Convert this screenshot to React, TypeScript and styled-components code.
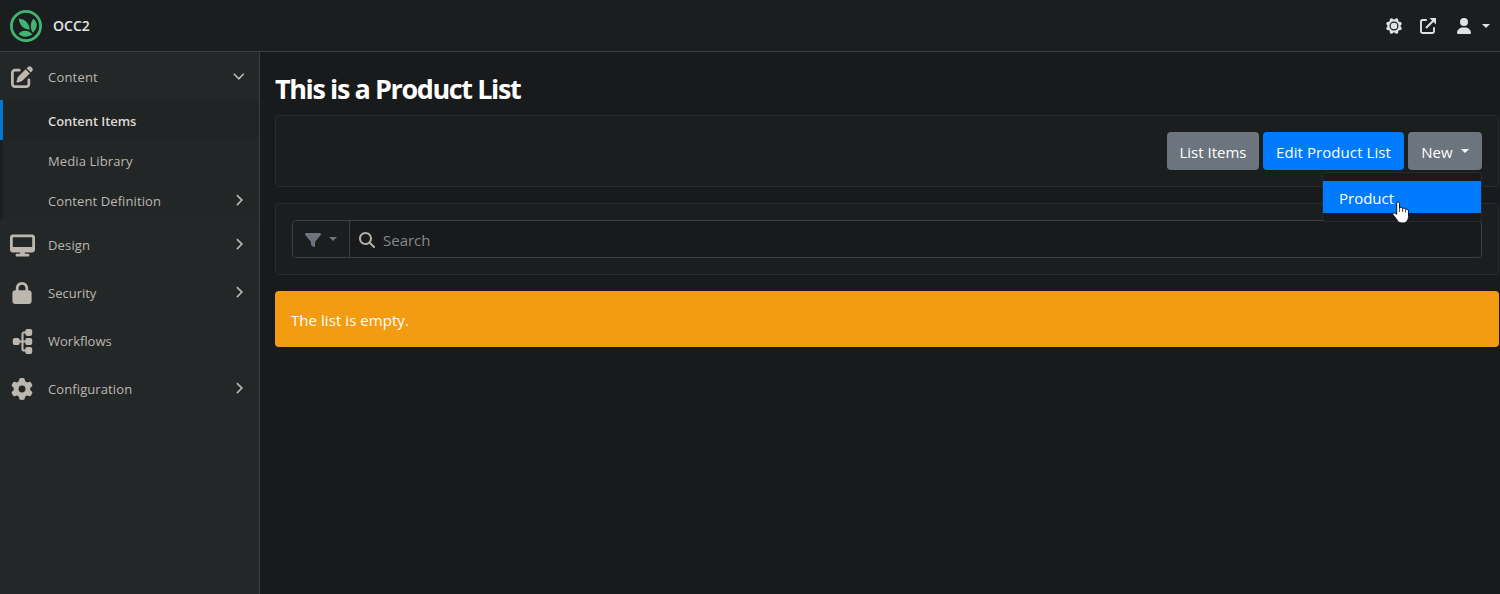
import React from 'react';
import styled, { createGlobalStyle } from 'styled-components';
import { FaPenToSquare, FaDesktop, FaLock, FaSitemap, FaGear, FaFilter, FaMagnifyingGlass, FaUser } from 'react-icons/fa6';

const GlobalStyle = createGlobalStyle`
  * { box-sizing: border-box; }
  body {
    margin: 0;
    background: #181a1b;
    color: #fff;
    font-family: 'Segoe UI', 'Open Sans', 'Noto Sans', sans-serif;
    font-size: 15px;
    overflow: hidden;
  }
`;

const Page = styled.div`
  display: flex;
  flex-direction: column;
  height: 594px;
`;

const TopBar = styled.header`
  display: flex;
  align-items: center;
  justify-content: space-between;
  height: 52px;
  padding: 0 10px;
  background: #1b1e1f;
  border-bottom: 1px solid #3a3f41;
`;

const Brand = styled.div`
  display: flex;
  align-items: center;
  gap: 11px;
  color: #e4e6e9;
  font-size: 14px;
  font-weight: 600;
`;

const TopActions = styled.div`
  display: flex;
  align-items: center;
  color: #dee2e6;
  svg { display: block; }
`;

const ActionIcon = styled.span<{ $after: number }>`
  margin-right: ${p => p.$after}px;
`;

const Caret = styled.span<{ $gap?: number }>`
  width: 0;
  height: 0;
  margin-left: ${p => p.$gap ?? 0}px;
  border: 4px solid transparent;
  border-top-color: currentColor;
  border-bottom: 0;
`;

const Body = styled.div`
  display: flex;
  flex: 1;
`;

const Sidebar = styled.nav`
  width: 260px;
  background: #232728;
  border-right: 1px solid #3a3f41;
  color: #bdb7af;
`;

const MenuRow = styled.a`
  display: flex;
  align-items: center;
  height: 48px;
  padding-right: 13px;
  font-size: 13px;
`;

const MenuIcon = styled.span<{ $turned?: boolean; $size?: number }>`
  display: flex;
  justify-content: center;
  width: 45px;
  margin-right: 3px;
  padding: 2px 1px 0 0;
  svg {
    width: ${p => p.$size ?? 22}px;
    height: ${p => p.$size ?? 22}px;
    transform: ${p => (p.$turned ? 'rotate(-90deg)' : 'none')};
  }
`;

const MenuLabel = styled.span<{ $tracking?: number }>`
  flex: 1;
  padding-top: 2px;
  letter-spacing: ${p => p.$tracking ?? 0.1}px;
`;

const SubMenu = styled.div`
  height: 120px;
`;

const SubRow = styled.a<{ $active?: boolean }>`
  display: flex;
  align-items: center;
  height: 40px;
  padding: 0 13px 0 45px;
  border-left: 3px solid ${p => (p.$active ? '#0078d4' : '#1b1e1f')};
  background: ${p => (p.$active ? '#202425' : '#222627')};
  color: ${p => (p.$active ? '#dcd9d4' : '#bdb7af')};
  font-size: 13px;
  font-weight: ${p => (p.$active ? 600 : 400)};
`;

const Main = styled.main`
  flex: 1;
  padding: 0 1px 0 15px;
`;

const Title = styled.h1`
  display: flex;
  align-items: center;
  height: 63px;
  margin: 0;
  padding-top: 10px;
  font-size: 27px;
  font-weight: 700;
  letter-spacing: -1.4px;
`;

const Card = styled.section`
  display: flex;
  justify-content: flex-end;
  gap: 4px;
  height: 72px;
  margin-bottom: 16px;
  padding: 16px;
  background: #1b1e1f;
  border: 1px solid #282c2d;
  border-radius: 4px;
`;

const Button = styled.button<{ $primary?: boolean; $width: number }>`
  display: flex;
  align-items: center;
  justify-content: center;
  width: ${p => p.$width}px;
  height: 38px;
  padding: 2px 0 0;
  border: 0;
  border-radius: 4px;
  background: ${p => (p.$primary ? '#007bff' : '#6c757d')};
  color: #fff;
  font: inherit;
  letter-spacing: ${p => (p.$primary ? 0.07 : 0)}px;
  white-space: nowrap;
`;

const ButtonCaret = styled(Caret)`
  margin-bottom: 3px;
`;

const DropdownAnchor = styled.div`
  position: relative;
`;

const DropdownMenu = styled.div`
  position: absolute;
  z-index: 2;
  top: 40px;
  right: 0;
  width: 160px;
  padding: 8px 0;
  background: #181a1b;
  border: 1px solid #282b2d;
  border-radius: 4px;
`;

const DropdownItem = styled.a`
  display: flex;
  align-items: center;
  height: 32px;
  padding: 1px 16px 0;
  background: #007bff;
`;

const Pointer = styled.svg`
  position: absolute;
  top: 28px;
  left: 69px;
`;

const InputGroup = styled.div`
  display: flex;
  width: 100%;
  height: 38px;
  border: 1px solid #3c4143;
  border-radius: 4px;
  background: #181a1b;
  overflow: hidden;
`;

const FilterButton = styled.div`
  display: flex;
  align-items: center;
  width: 57px;
  padding: 1px 0 0 12px;
  border-right: 1px solid #3c4143;
  background: #1b1e1f;
  color: #6c757d;
`;

const FilterCaret = styled(Caret)`
  margin-bottom: 2px;
`;

const SearchBox = styled.div`
  display: flex;
  align-items: center;
  padding: 2px 0 0 9px;
  gap: 8px;
  color: #b0aca6;
`;

const Placeholder = styled.span`
  color: #85888b;
`;

const Alert = styled.div`
  display: flex;
  align-items: center;
  height: 56px;
  padding: 1px 16px 0;
  border-radius: 4px;
  background: #f39c12;
  letter-spacing: 0.06px;
`;

const Logo = () => (
  <svg width="32" height="32" viewBox="0 0 32 32" fill="#41b572">
    <circle cx="16" cy="16" r="14.6" fill="none" stroke="#41b572" strokeWidth="2.8" />
    <path d="M8.8 8.5C14.5 9.2 19.5 13 19.7 19.7C13.5 19.3 9.2 15 8.8 8.5Z" />
    <path d="M23.5 8.5C28.2 13 27.7 18.5 22.7 22.7C20 18 20 13 23.5 8.5Z" />
    <path d="M8.5 23.8C12 19.8 18 19.8 22.5 24.3C18 27.8 12 27.6 8.5 23.8Z" />
  </svg>
);

const rays = [22.5, 67.5, 112.5, 157.5, 202.5, 247.5, 292.5, 337.5];

const Sun = () => (
  <svg width="16" height="16" viewBox="0 0 16 16" fill="currentColor">
    {rays.map(angle => (
      <path key={angle} d="M5 3.2L6.9 0.1Q8 -0.5 9.1 0.1L11 3.2Z" transform={`rotate(${angle} 8 8)`} />
    ))}
    <circle cx="8" cy="8" r="6" />
    <circle cx="8" cy="8" r="3.9" fill="none" stroke="#1b1e1f" strokeWidth="1.2" />
  </svg>
);

const ExternalLink = () => (
  <svg width="16" height="16" viewBox="0 0 16 16" fill="none" stroke="currentColor" strokeWidth="1.9">
    <path d="M6.8 2H2.5Q1 2 1 3.5V13.5Q1 15 2.5 15H12.5Q14 15 14 13.5V9.2" />
    <path d="M6 10L14 2" />
    <path d="M9.5 0H16V6.5L13.5 4L12 2.5Z" fill="currentColor" stroke="none" />
  </svg>
);

const Chevron = ({ down = false }: { down?: boolean }) => (
  <svg width="14" height="14" viewBox="0 0 14 14" fill="none" stroke="currentColor" strokeWidth="1.6">
    <path d={down ? 'M1.8 4.8L6.8 9.8L11.8 4.8' : 'M4.9 2.1L9.9 7.1L4.9 12.1'} />
  </svg>
);

const HandPointer = () => (
  <Pointer width="20" height="24" viewBox="0 0 20 24">
    <path
      d="M4.7 2.3C4.7 0.5 7.5 0.5 7.5 2.3V7C8 5.9 10.6 6.2 10.6 7.7C11.2 6.8 13.5 7.1 13.5 8.5C14.2 7.7 16.5 8.2 16.5 10V15.5C16.5 18.5 14.6 21.9 11.5 21.9H9.3C6.8 21.9 5.8 20.5 4.6 18.3L1 13.8C0 12 2.4 10.8 4.7 13.3Z"
      fill="#fff" stroke="#15151c" strokeWidth="1"
    />
    <path d="M7.6 7V11M10.6 8V11M13.5 8.8V11.5" stroke="#15151c" strokeWidth="0.8" />
  </Pointer>
);

const sections = [
  { label: 'Design', icon: <FaDesktop />, expandable: true, size: 25, tracking: 0.15 },
  { label: 'Security', icon: <FaLock />, expandable: true, tracking: 0 },
  { label: 'Workflows', icon: <FaSitemap />, expandable: false, size: 25, turned: true, tracking: 0 },
  { label: 'Configuration', icon: <FaGear />, expandable: true, tracking: 0.1 },
];

export default function App() {
  return (
    <Page>
      <GlobalStyle />
      <TopBar>
        <Brand><Logo />OCC2</Brand>
        <TopActions>
          <ActionIcon $after={18}><Sun /></ActionIcon>
          <ActionIcon $after={20}><ExternalLink /></ActionIcon>
          <ActionIcon $after={10}><FaUser size={16} /></ActionIcon>
          <Caret />
        </TopActions>
      </TopBar>
      <Body>
        <Sidebar>
          <MenuRow>
            <MenuIcon><FaPenToSquare /></MenuIcon>
            <MenuLabel $tracking={0.2}>Content</MenuLabel>
            <Chevron down />
          </MenuRow>
          <SubMenu>
            <SubRow $active><MenuLabel $tracking={-0.07}>Content Items</MenuLabel></SubRow>
            <SubRow><MenuLabel>Media Library</MenuLabel></SubRow>
            <SubRow><MenuLabel>Content Definition</MenuLabel><Chevron /></SubRow>
          </SubMenu>
          {sections.map(s => (
            <MenuRow key={s.label}>
              <MenuIcon $turned={s.turned} $size={s.size}>{s.icon}</MenuIcon>
              <MenuLabel $tracking={s.tracking}>{s.label}</MenuLabel>
              {s.expandable && <Chevron />}
            </MenuRow>
          ))}
        </Sidebar>
        <Main>
          <Title>This is a Product List</Title>
          <Card>
            <Button $width={92}>List Items</Button>
            <Button $width={141} $primary>Edit Product List</Button>
            <DropdownAnchor>
              <Button $width={74}>New<ButtonCaret $gap={8} /></Button>
              <DropdownMenu>
                <DropdownItem>Product</DropdownItem>
                <HandPointer />
              </DropdownMenu>
            </DropdownAnchor>
          </Card>
          <Card>
            <InputGroup>
              <FilterButton><FaFilter size={16} /><FilterCaret $gap={8} /></FilterButton>
              <SearchBox><FaMagnifyingGlass size={16} /><Placeholder>Search</Placeholder></SearchBox>
            </InputGroup>
          </Card>
          <Alert>The list is empty.</Alert>
        </Main>
      </Body>
    </Page>
  );
}
